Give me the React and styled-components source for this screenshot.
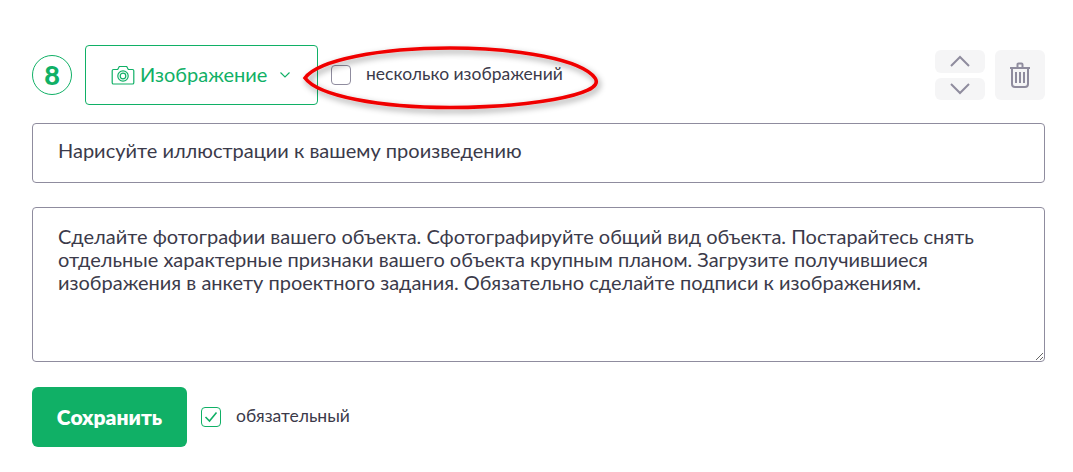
import React from "react";
import styled, { createGlobalStyle } from "styled-components";

const GREEN = "#10b066";
const GREY = "#8f8c9e";

const GlobalStyle = createGlobalStyle`
  html, body {
    margin: 0;
    padding: 0;
    background: #fff;
    font-family: Lato, "Noto Sans", sans-serif;
  }
`;

const Page = styled.div`
  width: 1013px;
  padding: 45px 28px 25px 32px;
  display: flex;
  flex-direction: column;
`;

const Toolbar = styled.div`
  position: relative;
  display: flex;
  align-items: center;
  height: 60px;
  margin-bottom: 18px;
`;

const Step = styled.div`
  box-sizing: border-box;
  width: 40px;
  height: 40px;
  border: 1px solid ${GREEN};
  border-radius: 50%;
  margin-right: 13px;
  padding-bottom: 1px;
  display: flex;
  align-items: center;
  justify-content: center;
  color: ${GREEN};
  font-size: 27px;
  font-weight: 900;
`;

const TypeSelect = styled.div`
  box-sizing: border-box;
  width: 233px;
  height: 60px;
  border: 1px solid ${GREEN};
  border-radius: 4px;
  padding-left: 25px;
  margin-right: 13px;
  display: flex;
  align-items: center;
  color: ${GREEN};
  font-size: 20px;
`;

const TypeName = styled.span`
  margin-top: -3px;
  margin-left: 5px;
  margin-right: 12px;
`;

const CheckRow = styled.label`
  display: flex;
  align-items: center;
  gap: 15px;
  color: #3b3a4a;
  font-size: 17.5px;
`;

const LabelText = styled.span`
  line-height: 20px;
  margin-top: -3px;
`;

const Box = styled.span`
  box-sizing: border-box;
  width: 20px;
  height: 20px;
  border: 1px solid ${p => (p.checked ? GREEN : GREY)};
  border-radius: 4px;
  display: flex;
  align-items: center;
  justify-content: center;
`;

const Tools = styled.div`
  margin-left: auto;
  display: flex;
  gap: 10px;
`;

const Arrows = styled.div`
  display: flex;
  flex-direction: column;
  gap: 5px;
`;

const ArrowButton = styled.button`
  width: 50px;
  height: 22.5px;
  padding: 0;
  border: 0;
  border-radius: 6px;
  background: #f5f5f6;
  display: flex;
  align-items: center;
  justify-content: center;
`;

const TrashButton = styled(ArrowButton)`
  height: 50px;
`;

const Oval = styled.svg`
  position: absolute;
  left: 268px;
  top: -5px;
  width: 310px;
  height: 80px;
  pointer-events: none;
`;

const TitleInput = styled.input`
  box-sizing: border-box;
  width: 100%;
  height: 60px;
  border: 1px solid ${GREY};
  border-radius: 4px;
  padding: 0 25px 6px;
  margin-bottom: 24px;
  outline: none;
  color: #3b3a4a;
  font: 20px Lato, "Noto Sans", sans-serif;
`;

const BodyInput = styled.textarea`
  display: block;
  box-sizing: border-box;
  width: 100%;
  height: 155px;
  border: 1px solid ${GREY};
  border-radius: 4px;
  padding: 17px 25px;
  margin: 0 0 25px;
  outline: none;
  color: #3b3a4a;
  font: 20px/23px Lato, "Noto Sans", sans-serif;
`;

const Footer = styled.div`
  display: flex;
  align-items: center;
  gap: 14px;
`;

const SaveButton = styled.button`
  width: 155px;
  height: 60px;
  border: 0;
  border-radius: 6px;
  background: ${GREEN};
  color: #fff;
  padding: 0 0 2px;
  font: 800 21px Lato, "Noto Sans", sans-serif;
`;

const Camera = () => (
  <svg width="24" height="20" viewBox="0 0 24 20" fill="none" stroke={GREEN} strokeWidth="1.2">
    <path d="M2.500 4.500h4.200l1.600-3h7.400l1.600 3h4.200a1.300 1.300 0 0 1 1.300 1.300v11.900a1.300 1.300 0 0 1-1.300 1.300h-19a1.300 1.300 0 0 1-1.300-1.300V5.800a1.300 1.300 0 0 1 1.300-1.300z" />
    <circle cx="12" cy="11" r="5.200" />
    <circle cx="12" cy="11" r="2.800" />
  </svg>
);

const Chevron = ({ up, size = 24, color = GREY, width = 2 }) => (
  <svg width={size} height={size * 0.5} viewBox="0 0 24 12" fill="none" stroke={color} strokeWidth={width}>
    <path d={up ? "M3 11 12 2l9 9" : "M3 1l9 9 9-9"} />
  </svg>
);

const Trash = () => (
  <svg width="22" height="26" viewBox="0 0 22 26" fill="none" stroke={GREY} strokeWidth="2">
    <path d="M1 6h20M8.500 5V2.500a1 1 0 0 1 1-1h3a1 1 0 0 1 1 1V5" />
    <path d="M3 6v16a3 3 0 0 0 3 3h10a3 3 0 0 0 3-3V6" />
    <path d="M7 10v11M11 10v11M15 10v11" />
  </svg>
);

const Tick = () => (
  <svg width="14" height="12" viewBox="0 0 14 12" fill="none" stroke={GREEN} strokeWidth="1.600">
    <path d="M1.500 6l4 4 7-8.500" />
  </svg>
);

export default function App() {
  return (
    <Page>
      <GlobalStyle />
      <Toolbar>
        <Step>8</Step>
        <TypeSelect>
          <Camera />
          <TypeName>Изображение</TypeName>
          <Chevron size={12} color={GREEN} width={2.200} />
        </TypeSelect>
        <CheckRow>
          <Box />
          <LabelText>несколько изображений</LabelText>
        </CheckRow>
        <Tools>
          <Arrows>
            <ArrowButton><Chevron up /></ArrowButton>
            <ArrowButton><Chevron /></ArrowButton>
          </Arrows>
          <TrashButton><Trash /></TrashButton>
        </Tools>
        <Oval viewBox="0 0 310 80">
          <defs>
            <filter id="ovalShadow" x="-5%" y="-20%" width="110%" height="150%">
              <feDropShadow dx="2" dy="3" stdDeviation="3" floodColor="#000" floodOpacity="0.4" />
            </filter>
          </defs>
          <path
            d="M5 38C18 20 80 8 150 8S282 20 295 38 220 67.500 150 67.500 18 56 5 38z"
            fill="none"
            stroke="#f00000"
            strokeWidth="3.600"
            filter="url(#ovalShadow)"
          />
        </Oval>
      </Toolbar>
      <TitleInput defaultValue="Нарисуйте иллюстрации к вашему произведению" />
      <BodyInput defaultValue="Сделайте фотографии вашего объекта. Сфотографируйте общий вид объекта. Постарайтесь снять отдельные характерные признаки вашего объекта крупным планом. Загрузите получившиеся изображения в анкету проектного задания. Обязательно сделайте подписи к изображениям." />
      <Footer>
        <SaveButton>Сохранить</SaveButton>
        <CheckRow>
          <Box checked><Tick /></Box>
          <LabelText>обязательный</LabelText>
        </CheckRow>
      </Footer>
    </Page>
  );
}
